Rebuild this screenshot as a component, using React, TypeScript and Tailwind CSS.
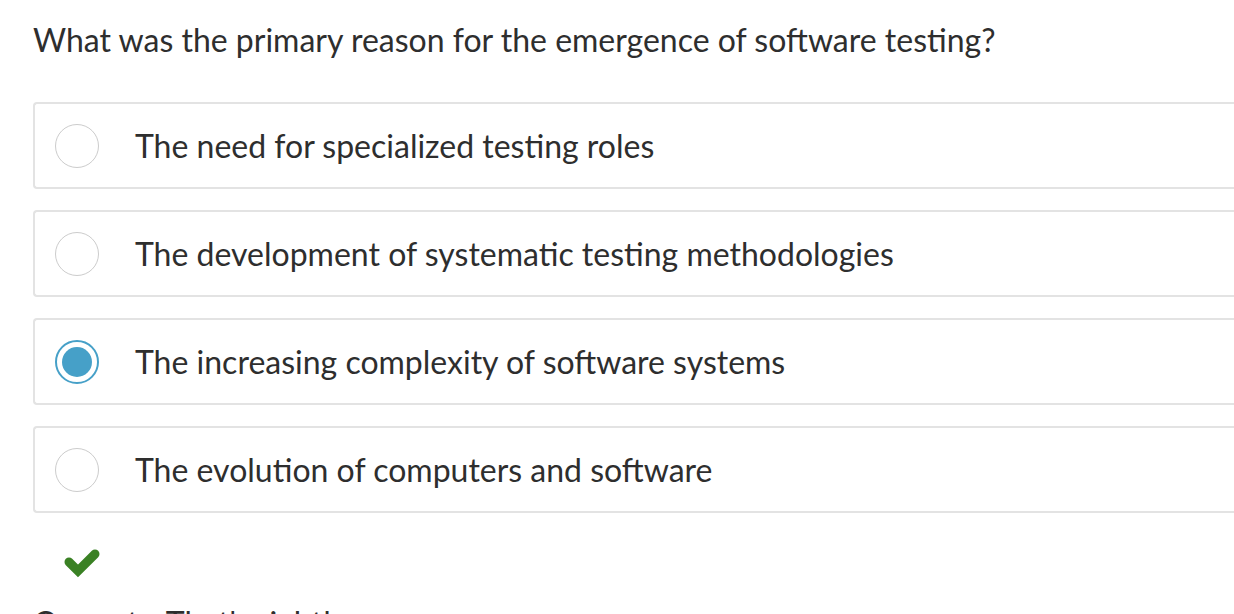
import React from "react";

const options = [
  "The need for specialized testing roles",
  "The development of systematic testing methodologies",
  "The increasing complexity of software systems",
  "The evolution of computers and software",
];

export default function App() {
  return (
    <div
      className="w-[1234px] h-[614px] overflow-hidden bg-white text-[#2e2e2e] pl-[33px] pt-[19px]"
      style={{ fontFamily: "Lato, 'Open Sans', sans-serif" }}
    >
      <div className="text-[32px] leading-[42px]">
        What was the primary reason for the emergence of software testing?
      </div>
      <div className="mt-[41px] flex flex-col gap-[21px]">
        {options.map((o, i) => (
          <div
            key={i}
            className="h-[87px] border-2 border-[#e3e3e3] rounded-[4px] border-r-0 rounded-r-none flex items-center pl-[20px]"
          >
            {i === 2 ? (
              <div className="w-[44px] h-[44px] rounded-full border-2 border-[#46a0c8] flex items-center justify-center">
                <div className="w-[30px] h-[30px] rounded-full bg-[#46a0c8]" />
              </div>
            ) : (
              <div className="w-[44px] h-[44px] rounded-full border-[1.5px] border-[#cccccc]" />
            )}
            <span className="ml-[36px] text-[32px]">{o}</span>
          </div>
        ))}
      </div>
      <div className="mt-[34px] ml-[30px]">
        <svg width="40" height="32" viewBox="0 0 40 32">
          <polyline
            points="6,15 15,24 32,7"
            fill="none"
            stroke="#3a8124"
            strokeWidth="9"
            strokeLinecap="round"
            strokeLinejoin="miter"
          />
        </svg>
      </div>
      <div className="mt-[23px] text-[32px] leading-[42px]">Correct - That's right!</div>
    </div>
  );
}
